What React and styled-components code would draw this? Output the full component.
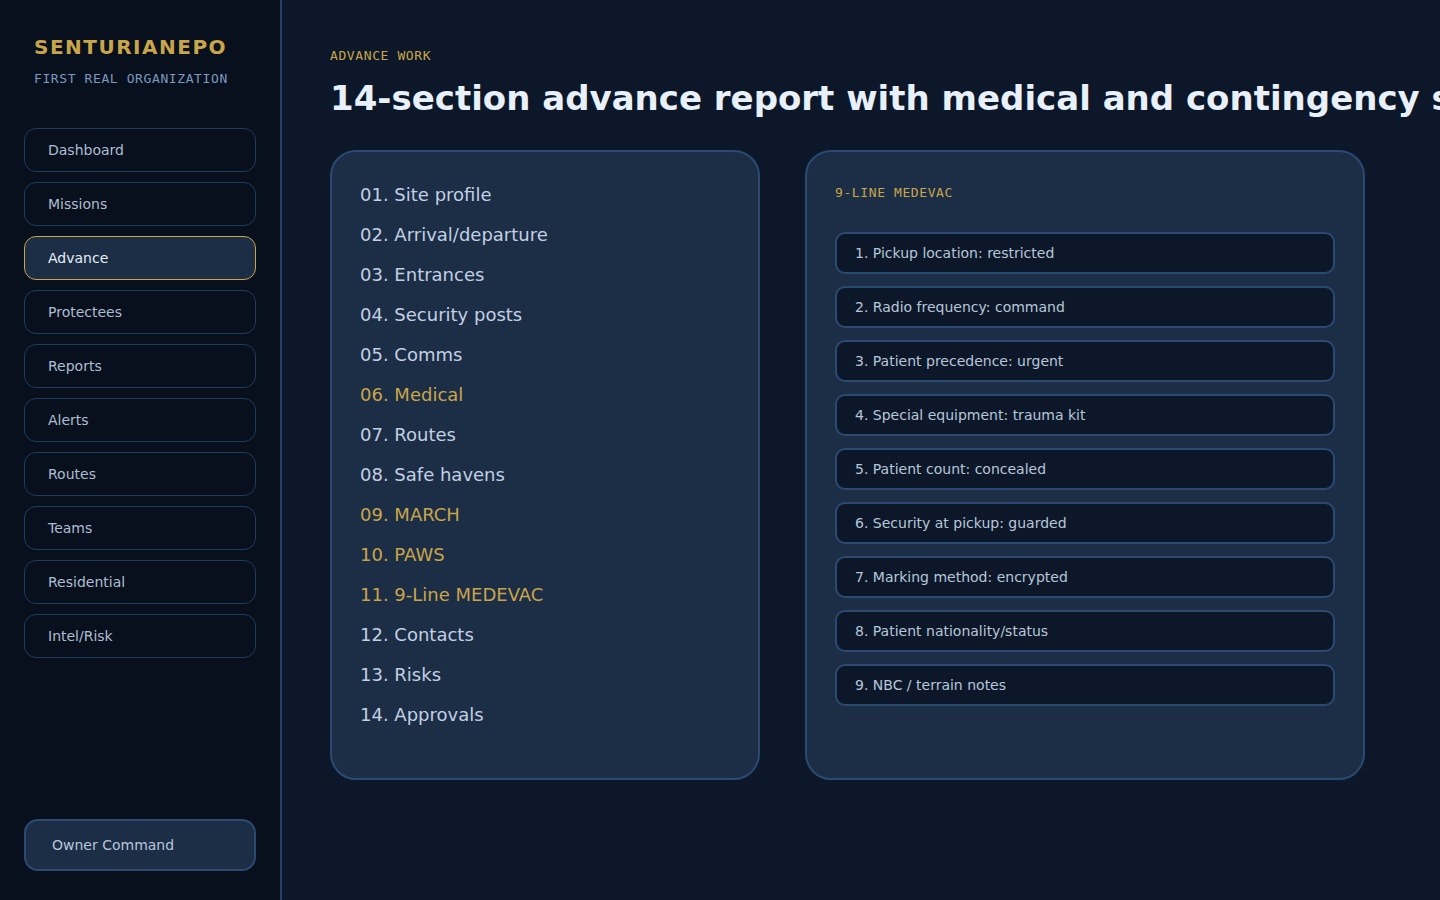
import React from 'react';
import styled, { createGlobalStyle } from 'styled-components';

const GlobalStyle = createGlobalStyle`
	html, body {
		margin: 0;
		padding: 0;
		background: #0c1829;
		overflow: hidden;
	}
	* {
		box-sizing: border-box;
	}
	body {
		font-family: 'DejaVu Sans', Verdana, sans-serif;
	}
`;

const navItems = [
	'Dashboard',
	'Missions',
	'Advance',
	'Protectees',
	'Reports',
	'Alerts',
	'Routes',
	'Teams',
	'Residential',
	'Intel/Risk',
];

const sections = [
	{ label: '01. Site profile' },
	{ label: '02. Arrival/departure' },
	{ label: '03. Entrances' },
	{ label: '04. Security posts' },
	{ label: '05. Comms' },
	{ label: '06. Medical', hot: true },
	{ label: '07. Routes' },
	{ label: '08. Safe havens' },
	{ label: '09. MARCH', hot: true },
	{ label: '10. PAWS', hot: true },
	{ label: '11. 9-Line MEDEVAC', hot: true },
	{ label: '12. Contacts' },
	{ label: '13. Risks' },
	{ label: '14. Approvals' },
];

const medevac = [
	'1. Pickup location: restricted',
	'2. Radio frequency: command',
	'3. Patient precedence: urgent',
	'4. Special equipment: trauma kit',
	'5. Patient count: concealed',
	'6. Security at pickup: guarded',
	'7. Marking method: encrypted',
	'8. Patient nationality/status',
	'9. NBC / terrain notes',
];

const App = () => {
	return (
		<Shell>
			<GlobalStyle />
			<Sidebar>
				<Brand>
					<BrandName>SENTURIANEPO</BrandName>
					<BrandSub>FIRST REAL ORGANIZATION</BrandSub>
				</Brand>
				<Nav>
					{navItems.map((item) => (
						<NavItem key={item} $active={item === 'Advance'}>
							{item}
						</NavItem>
					))}
				</Nav>
				<OwnerButton>Owner Command</OwnerButton>
			</Sidebar>
			<Main>
				<Eyebrow>ADVANCE WORK</Eyebrow>
				<Heading>
					14-section advance report with medical and contingency sections
				</Heading>
				<Cards>
					<Card>
						<SectionList>
							{sections.map((s) => (
								<SectionItem key={s.label} $hot={s.hot}>
									{s.label}
								</SectionItem>
							))}
						</SectionList>
					</Card>
					<Card $wide>
						<CardLabel>9-LINE MEDEVAC</CardLabel>
						<LineList>
							{medevac.map((line) => (
								<LineRow key={line}>{line}</LineRow>
							))}
						</LineList>
					</Card>
				</Cards>
			</Main>
		</Shell>
	);
};

const Shell = styled.div`
	display: grid;
	grid-template-columns: 282px 1fr;
	height: 100vh;
	width: 100vw;
	overflow: hidden;
`;

const Sidebar = styled.aside`
	background: #07101c;
	border-right: 2px solid #263f62;
	display: flex;
	flex-direction: column;
	padding: 34px 24px 29px 24px;
`;

const Brand = styled.div`
	padding-left: 10px;
	margin-bottom: 40px;
`;

const BrandName = styled.div`
	color: #c9a54a;
	font-size: 20px;
	font-weight: bold;
	letter-spacing: 1.5px;
	line-height: 26px;
`;

const BrandSub = styled.div`
	margin-top: 10px;
	font-family: 'DejaVu Sans Mono', monospace;
	color: #7d98bf;
	font-size: 13px;
	letter-spacing: 0.6px;
	line-height: 18px;
`;

const Nav = styled.nav`
	display: flex;
	flex-direction: column;
	gap: 10px;
	flex: 1;
`;

const NavItem = styled.div`
	height: 44px;
	display: flex;
	align-items: center;
	padding-left: 23px;
	border-radius: 12px;
	border: 1px solid ${(p) => (p.$active ? '#c9a54a' : '#223c60')};
	background: ${(p) => (p.$active ? '#1c2d46' : 'transparent')};
	color: ${(p) => (p.$active ? '#e6edf7' : '#aebdd2')};
	font-size: 14px;
`;

const OwnerButton = styled.div`
	height: 52px;
	display: flex;
	align-items: center;
	padding-left: 26px;
	border-radius: 14px;
	border: 2px solid #2b4a72;
	background: #1c2d46;
	color: #b8c6da;
	font-size: 14px;
`;

const Main = styled.main`
	padding: 48px 0 0 48px;
	min-width: 0;
`;

const Eyebrow = styled.div`
	font-family: 'DejaVu Sans Mono', monospace;
	color: #c9a54a;
	font-size: 13px;
	letter-spacing: 0.6px;
	line-height: 16px;
`;

const Heading = styled.h1`
	margin: 14px 0 32px;
	color: #e8f0fa;
	font-size: 34px;
	font-weight: bold;
	line-height: 40px;
	white-space: nowrap;
`;

const Cards = styled.div`
	display: grid;
	grid-template-columns: 430px 560px;
	column-gap: 45px;
	height: 630px;
`;

const Card = styled.section`
	background: #1c2d46;
	border: 2px solid #2b4a72;
	border-radius: 26px;
	padding: ${(p) => (p.$wide ? '29px 28px' : '22px 28px')};
`;

const SectionList = styled.ol`
	list-style: none;
	margin: 0;
	padding: 0;
	display: flex;
	flex-direction: column;
`;

const SectionItem = styled.li`
	height: 40px;
	display: flex;
	align-items: center;
	font-size: 18px;
	color: ${(p) => (p.$hot ? '#c9a54a' : '#c2d0e3')};
`;

const CardLabel = styled.div`
	font-family: 'DejaVu Sans Mono', monospace;
	color: #c9a54a;
	font-size: 13px;
	letter-spacing: 0.6px;
	line-height: 24px;
	margin-bottom: 27px;
`;

const LineList = styled.div`
	display: flex;
	flex-direction: column;
	gap: 12px;
`;

const LineRow = styled.div`
	height: 42px;
	display: flex;
	align-items: center;
	padding-left: 18px;
	border-radius: 10px;
	border: 2px solid #2b4a72;
	background: #0c1829;
	color: #b8c6da;
	font-size: 14px;
`;

export default App;
